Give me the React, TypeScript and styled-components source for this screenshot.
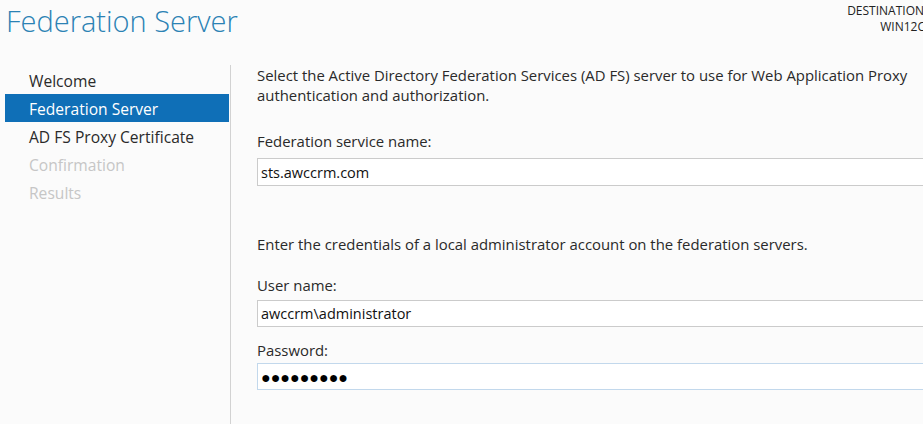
import React from "react";
import styled, { createGlobalStyle } from "styled-components";

const Global = createGlobalStyle`
  html, body { margin: 0; padding: 0; background: #fbfbfb; overflow: hidden; }
  body { width: 923px; height: 424px; font-family: "Open Sans", "Noto Sans", sans-serif; }
`;

const Page = styled.div`
  width: 923px;
  height: 424px;
  display: flex;
  flex-direction: column;
  overflow: hidden;
  background: #fbfbfb;
`;

const Header = styled.div`
  display: flex;
  justify-content: space-between;
  align-items: flex-start;
  height: 65px;
`;

const Title = styled.h1`
  margin: 0;
  padding: 2px 0 0 6px;
  font-family: "Open Sans", sans-serif;
  font-weight: 300;
  font-size: 29px;
  line-height: 38px;
  color: #2b82b4;
`;

const Destination = styled.div`
  margin-right: -46px;
  padding-top: 3px;
  text-align: right;
  font-size: 12px;
  line-height: 16px;
  color: #222;
  white-space: nowrap;
`;

const Body = styled.div`
  flex: 1;
  display: flex;
`;

const Nav = styled.nav`
  width: 224px;
  margin-left: 5px;
  padding-top: 1px;
  display: flex;
  flex-direction: column;
`;

const NavItem = styled.div<{ $state: "normal" | "active" | "disabled" }>`
  height: 28px;
  display: flex;
  align-items: center;
  padding: 2px 0 0 24px;
  box-sizing: border-box;
  font-size: 15.6px;
  color: ${(p) =>
    p.$state === "active" ? "#ffffff" : p.$state === "disabled" ? "#c6c6c6" : "#2a2a2a"};
  background: ${(p) => (p.$state === "active" ? "#0f6fb7" : "transparent")};
`;

const Divider = styled.div`
  width: 1px;
  margin-left: 1px;
  background: #d2d2d2;
`;

const Content = styled.div`
  flex: 1;
  padding: 0 0 0 26px;
  display: flex;
  flex-direction: column;
  font-size: 14.9px;
  color: #2a2a2a;
`;

const Para = styled.p<{ $top: number }>`
  margin: ${(p) => p.$top}px 0 0;
  line-height: 20px;
  white-space: nowrap;
`;

const Label = styled.div<{ $top: number }>`
  margin-top: ${(p) => p.$top}px;
  line-height: 20px;
`;

const Field = styled.div<{ $focus?: boolean; $top: number; $h: number }>`
  margin-top: ${(p) => p.$top}px;
  margin-right: -10px;
  height: ${(p) => p.$h}px;
  border: 1px solid ${(p) => (p.$focus ? "#c2d8ec" : "#cbcbcb")};
  background: #ffffff;
  display: flex;
  align-items: center;
  padding-left: 3px;
  font-size: 14.5px;
  color: #111;
`;

const Dots = styled.span`
  font-size: 16px;
  color: #000;
`;

export default function App() {
  return (
    <Page>
      <Global />
      <Header>
        <Title>Federation Server</Title>
        <Destination>
          DESTINATION SERVER
          <br />
          WIN12CR2-WAP
        </Destination>
      </Header>
      <Body>
        <Nav>
          <NavItem $state="normal">Welcome</NavItem>
          <NavItem $state="active">Federation Server</NavItem>
          <NavItem $state="normal">AD FS Proxy Certificate</NavItem>
          <NavItem $state="disabled">Confirmation</NavItem>
          <NavItem $state="disabled">Results</NavItem>
        </Nav>
        <Divider />
        <Content>
          <Para $top={0}>
            Select the Active Directory Federation Services (AD FS) server to use for Web Application Proxy
            <br />
            authentication and authorization.
          </Para>
          <Label $top={26}>Federation service name:</Label>
          <Field $top={7} $h={26}>sts.awccrm.com</Field>
          <Para $top={48}>Enter the credentials of a local administrator account on the federation servers.</Para>
          <Label $top={21}>User name:</Label>
          <Field $top={5} $h={25}>awccrm\administrator</Field>
          <Label $top={13}>Password:</Label>
          <Field $top={3} $h={25} $focus>
            <Dots>●●●●●●●●●</Dots>
          </Field>
        </Content>
      </Body>
    </Page>
  );
}
